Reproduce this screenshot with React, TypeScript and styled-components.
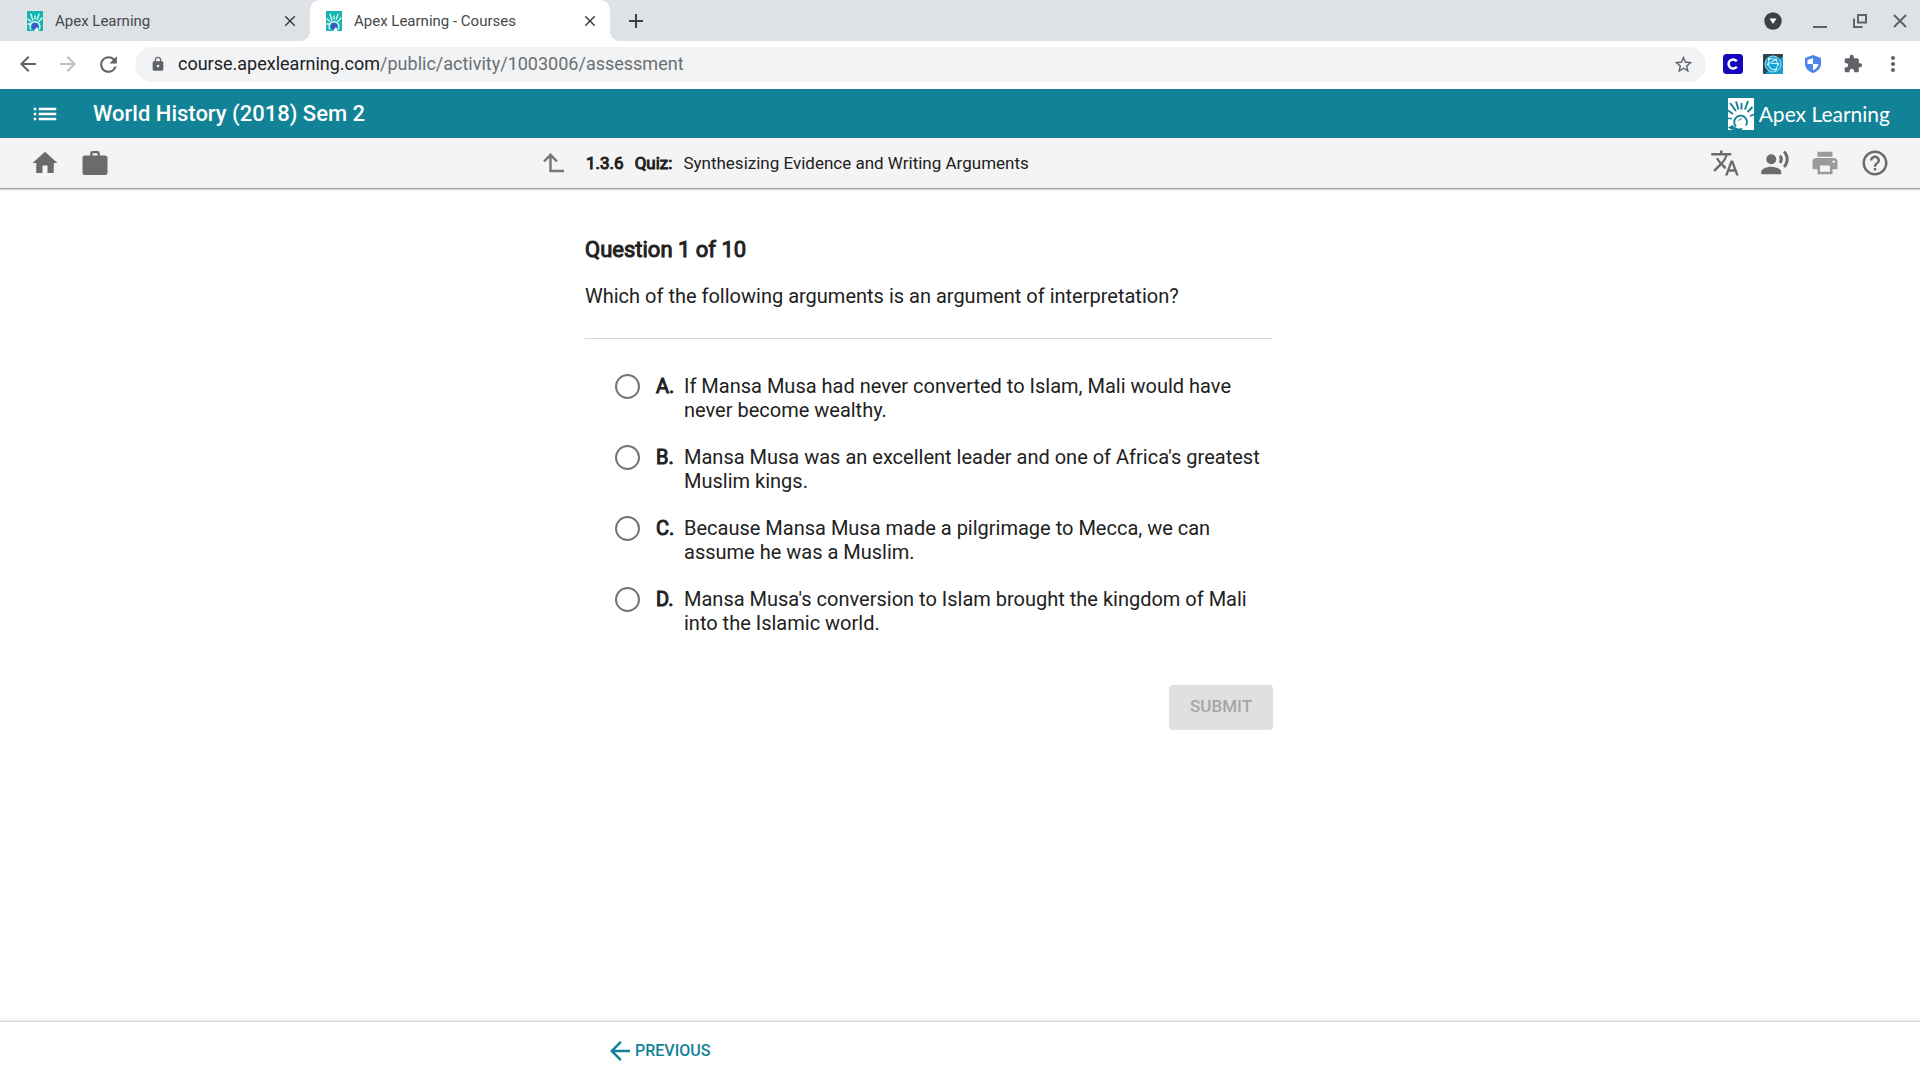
import React, { useState } from "react";
import styled, { createGlobalStyle, css } from "styled-components";
import {
  MdAdd,
  MdArrowBack,
  MdArrowForward,
  MdClose,
  MdExtension,
  MdHelpOutline,
  MdHome,
  MdList,
  MdLock,
  MdMoreVert,
  MdPrint,
  MdRecordVoiceOver,
  MdRefresh,
  MdStarBorder,
  MdTranslate,
} from "react-icons/md";

const teal = "#128296";
const ink = "#212121";

const GlobalStyle = createGlobalStyle`
  *, *::before, *::after { box-sizing: border-box; }
  body {
    margin: 0;
    background: #fff;
    color: ${ink};
    font-family: Roboto, "Liberation Sans", sans-serif;
  }
  button { font-family: inherit; }
  svg { display: block; flex: none; }
`;

/* Regular letter widths with a thickened outline */
const heavy = css`
  font-weight: 400;
  -webkit-text-stroke: 1px currentColor;
`;

const Page = styled.div`
  min-height: 100vh;
  display: flex;
  flex-direction: column;
`;

/* ---------- browser chrome ---------- */

const TabStrip = styled.header`
  display: flex;
  align-items: stretch;
  height: 41px;
  background: #dee1e6;
`;

const Tab = styled.div<{ $active?: boolean }>`
  position: relative;
  display: flex;
  align-items: center;
  gap: 12px;
  width: ${(p) => (p.$active ? 300 : 310)}px;
  padding: 0 11px 0 ${(p) => (p.$active ? 16 : 27)}px;
  background: ${(p) => (p.$active ? "#fff" : "transparent")};
  border-radius: ${(p) => (p.$active ? "10px 10px 0 0" : "0")};
  color: #45494d;
  font-size: 15px;
  line-height: 20px;

  &::before,
  &::after {
    content: "";
    display: ${(p) => (p.$active ? "block" : "none")};
    position: absolute;
    bottom: 0;
    width: 10px;
    height: 10px;
  }
  &::before {
    left: -10px;
    background: radial-gradient(circle at 0 0, transparent 10px, #fff 10px);
  }
  &::after {
    right: -10px;
    background: radial-gradient(circle at 100% 0, transparent 10px, #fff 10px);
  }
`;

const TabTitle = styled.span`
  flex: 1;
`;

const IconButton = styled.button<{ $size: number; $color?: string }>`
  display: flex;
  align-items: center;
  justify-content: center;
  flex: none;
  width: ${(p) => p.$size}px;
  height: ${(p) => p.$size}px;
  padding: 0;
  border: 0;
  background: none;
  color: ${(p) => p.$color || "#5f6368"};
  cursor: pointer;
`;

const NewTab = styled.div`
  display: flex;
  align-items: center;
  padding-left: 14px;
`;

const WindowControls = styled.div`
  display: flex;
  align-items: center;
  margin-left: auto;
`;

const AccountSlot = styled.div`
  padding-right: 7px;
`;

const AddressRow = styled.div`
  display: flex;
  align-items: center;
  height: 48px;
  padding: 0 7px 2px 8px;
`;

const AddressBar = styled.div`
  display: flex;
  align-items: center;
  flex: 1;
  height: 35px;
  margin: 0 7px;
  padding: 0 12px 0 15px;
  border-radius: 18px;
  background: #f1f3f4;
  color: #5f6368;
`;

const Url = styled.span`
  flex: 1;
  margin-left: 12px;
  color: #6b6f73;
  font-size: 18px;
  line-height: 24px;
`;

const Host = styled.span`
  color: #202124;
`;

/* ---------- course header ---------- */

const CourseBar = styled.div`
  display: flex;
  align-items: center;
  height: 49px;
  padding: 0 30px 0 20px;
  background: ${teal};
  color: #fff;
`;

const CourseTitle = styled.h1`
  flex: 1;
  margin: 0 0 0 23px;
  font-size: 22px;
  line-height: 28px;
  font-weight: 500;
`;

const Brand = styled.a`
  display: flex;
  align-items: center;
  gap: 5px;
  color: #fff;
  text-decoration: none;
  font-family: Lato, "Open Sans", sans-serif;
  font-size: 21px;
  line-height: 32px;
`;

const ActivityBar = styled.nav`
  display: grid;
  grid-template-columns: 1fr 750px 1fr;
  align-items: center;
  height: 51px;
  padding: 0 20px;
  background: #f4f4f4;
  border-bottom: 1px solid #9b9b9b;
  box-shadow: 0 1px 2px rgba(0, 0, 0, 0.2);
`;

const Tools = styled.div<{ $end?: boolean }>`
  display: flex;
  justify-content: ${(p) => (p.$end ? "flex-end" : "flex-start")};
`;

const Activity = styled.div`
  display: flex;
  align-items: center;
  gap: 11px;
  margin-left: -52px;
  font-size: 17px;
  line-height: 24px;
`;

const Strong = styled.strong`
  ${heavy}
`;

/* ---------- question ---------- */

const Main = styled.main`
  flex: 1;
  width: 100%;
  max-width: 750px;
  margin: 0 auto;
  padding: 47px 62px 0 0;
`;

const Heading = styled.h2`
  margin: 0;
  font-size: 22px;
  line-height: 28px;
  ${heavy}
`;

const Prompt = styled.p`
  margin: 20px 0 0;
  padding-bottom: 30px;
  border-bottom: 1px solid #d8d8d8;
  font-size: 20px;
  line-height: 24px;
`;

const Options = styled.form`
  display: flex;
  flex-direction: column;
  gap: 23px;
  padding: 35px 0 0 30px;
`;

const Option = styled.label`
  display: flex;
  align-items: flex-start;
  font-size: 20px;
  line-height: 24px;
  cursor: pointer;
`;

const Radio = styled.input`
  appearance: none;
  flex: none;
  width: 25px;
  height: 25px;
  margin: 0 16px 0 0;
  border: 2px solid #757575;
  border-radius: 50%;
  background: #fff;

  &:checked {
    border-color: ${teal};
    background: radial-gradient(circle, ${teal} 6px, #fff 7px);
  }
`;

const Letter = styled.strong`
  flex: none;
  width: 28px;
  ${heavy}
`;

const Actions = styled.div`
  display: flex;
  justify-content: flex-end;
  padding-top: 50px;
`;

const Submit = styled.button`
  height: 45px;
  padding: 0 21px 4px;
  border: 0;
  border-radius: 4px;
  background: #e0e0e0;
  color: #a6a6a6;
  font-size: 17px;
  line-height: 24px;
  font-weight: 500;
`;

const Footer = styled.footer`
  height: 59px;
  border-top: 1px solid #dadada;
  background: #fff;
  box-shadow: 0 -1px 4px rgba(0, 0, 0, 0.12);
`;

const FooterInner = styled.div`
  display: flex;
  align-items: center;
  max-width: 750px;
  height: 100%;
  margin: 0 auto;
  padding-left: 20px;
`;

const Previous = styled.button`
  display: flex;
  align-items: center;
  padding: 0;
  border: 0;
  background: none;
  color: ${teal};
  font-size: 16px;
  line-height: 24px;
  font-weight: 500;
  cursor: pointer;
`;

/* ---------- drawings ---------- */

const Favicon = () => (
  <svg width="16" height="20" viewBox="0 0 16 20" aria-hidden="true">
    <rect width="16" height="20" fill="#17b5b0" />
    <g stroke="#e4fbf9" strokeWidth="1.3" strokeLinecap="round" fill="none">
      <path d="M5.8 9.2 4 3.2M8 8V5M10.2 8.4 12 3.2M4 10.4 1 8M12 10.4 15 7M3.5 13H1" />
      <path d="M3.5 18a5 5 0 1 1 9 0" strokeWidth="1.5" />
    </g>
    <circle cx="8" cy="15.2" r="3.4" fill="#3a5bc4" />
    <path d="M8 18.5 10 16l1.2 2.6V20H7.4z" fill="#fff" />
  </svg>
);

const BrandMark = () => (
  <svg width="26" height="32" viewBox="0 0 26 32" aria-hidden="true">
    <rect width="26" height="32" fill="#fff" />
    <g stroke={teal} fill="none">
      <path d="M2 5l6 8M8 3.500l2.500 8M13.500 5v6.500M20 3l-3 8.500M24.500 9 19.500 14M0 12.500l5 3.500" strokeWidth="1.900" />
      <path d="M0 20.500h4M22 18l4-1.500" strokeWidth="1.600" />
      <path d="M8 28.500A6.400 6.400 0 1 1 18 27.500" strokeWidth="1.900" />
      <path d="M10.500 23A3.600 3.600 0 0 1 14 20.800" strokeWidth="1" />
    </g>
    <path d="M0 29.500 4.500 27c2 3 6 4 10 3l-.5 2H6c-2-.3-4-1-6-2.500z" fill={teal} />
  </svg>
);

const AccountIcon = () => (
  <svg width="18" height="18" viewBox="0 0 18 18" aria-hidden="true">
    <circle cx="9" cy="9" r="8.7" fill="#3c4043" />
    <path d="M5.500 6.500h7L9 12z" fill="#fff" />
  </svg>
);

const MinimizeIcon = () => (
  <svg width="14" height="14" viewBox="0 0 14 14" aria-hidden="true">
    <path d="M0 13h14" stroke="#5f6368" strokeWidth="2" />
  </svg>
);

const RestoreIcon = () => (
  <svg width="14" height="14" viewBox="0 0 14 14" aria-hidden="true">
    <path d="M5 1h8v7.500H5zM1 4.500V13h8.500" fill="none" stroke="#5f6368" strokeWidth="2" />
  </svg>
);

const WindowCloseIcon = () => (
  <svg width="14" height="14" viewBox="0 0 14 14" aria-hidden="true">
    <path d="m1 1 12 12M13 1 1 13" stroke="#5f6368" strokeWidth="2" />
  </svg>
);

const CleverIcon = () => (
  <svg width="20" height="20" viewBox="0 0 20 20" aria-hidden="true">
    <rect width="20" height="20" rx="3.500" fill="#1408bd" />
    <path d="M13.800 7.200A4.600 4.600 0 1 0 13.800 12.800" fill="none" stroke="#fff" strokeWidth="2.500" />
  </svg>
);

const GlobeIcon = () => (
  <svg width="20" height="20" viewBox="0 0 20 20" aria-hidden="true">
    <rect width="20" height="20" rx="1" fill="#33414f" />
    <path d="M20 2v18H2z" fill="#1b9fcc" />
    <circle cx="10" cy="10" r="8" fill="#1ba3d6" stroke="#8fe2f8" />
    <g stroke="#c8f3fd" strokeWidth="1" fill="none">
      <path d="M6 4.500 5 10l3 5 5 1M6 4.500l7 1 2 5-2 5.500M5 10l8-4.500M8 9.500h7" />
    </g>
    <g fill="#e6fbff">
      <circle cx="6" cy="5" r="1.100" />
      <circle cx="13" cy="5.500" r="1.100" />
      <circle cx="5" cy="10.500" r="1.100" />
      <circle cx="15" cy="10" r="1.100" />
      <circle cx="12.500" cy="15.500" r="1.100" />
    </g>
  </svg>
);

const ShieldIcon = () => (
  <svg width="16" height="18" viewBox="0 0 16 18" aria-hidden="true">
    <path d="M8 0 16 3v5.500c0 4.500-3.400 8.200-8 9.500-4.600-1.300-8-5-8-9.500V3z" fill="#4a86e8" />
    <path d="M8 3v6H2.500V5zM8 9h5.500c-.4 3-2.500 5.200-5.500 6.300z" fill="#fff" />
  </svg>
);

const UpLevelIcon = () => (
  <svg width="22" height="20" viewBox="0 0 22 20" aria-hidden="true">
    <path d="M21 18H7.500V2.500M1 8.500l6.500-6.700L14 8.500" fill="none" stroke="#757575" strokeWidth="2.400" />
  </svg>
);

const BriefcaseIcon = () => (
  <svg width="26" height="24" viewBox="0 0 26 24" aria-hidden="true">
    <path
      d="M10.500 0h5a2.300 2.300 0 0 1 2.300 2.300V4.500h5.200A2.500 2.500 0 0 1 25.500 7v14.500A2.500 2.500 0 0 1 23 24H3a2.500 2.500 0 0 1-2.500-2.500V7A2.500 2.500 0 0 1 3 4.500h5.200V2.300A2.300 2.300 0 0 1 10.500 0zm0 2.300v2.200h5V2.300z"
      fill="currentColor"
    />
  </svg>
);

/* ---------- data ---------- */

const options = [
  { letter: "A", text: "If Mansa Musa had never converted to Islam, Mali would have never become wealthy." },
  { letter: "B", text: "Mansa Musa was an excellent leader and one of Africa's greatest Muslim kings." },
  { letter: "C", text: "Because Mansa Musa made a pilgrimage to Mecca, we can assume he was a Muslim." },
  { letter: "D", text: "Mansa Musa's conversion to Islam brought the kingdom of Mali into the Islamic world." },
];

const toolColor = "#6b6b6b";

export default function App() {
  const [answer, setAnswer] = useState("");

  return (
    <Page>
      <GlobalStyle />
      <TabStrip>
        <Tab>
          <Favicon />
          <TabTitle>Apex Learning</TabTitle>
          <IconButton $size={18} $color="#3c4043" aria-label="Close tab">
            <MdClose size={18} />
          </IconButton>
        </Tab>
        <Tab $active>
          <Favicon />
          <TabTitle>Apex Learning - Courses</TabTitle>
          <IconButton $size={18} $color="#3c4043" aria-label="Close tab">
            <MdClose size={18} />
          </IconButton>
        </Tab>
        <NewTab>
          <IconButton $size={24} $color="#3c4043" aria-label="New tab">
            <MdAdd size={24} />
          </IconButton>
        </NewTab>
        <WindowControls>
          <AccountSlot>
            <IconButton $size={40} aria-label="Account"><AccountIcon /></IconButton>
          </AccountSlot>
          <IconButton $size={40} aria-label="Minimize"><MinimizeIcon /></IconButton>
          <IconButton $size={40} aria-label="Restore"><RestoreIcon /></IconButton>
          <IconButton $size={40} aria-label="Close window"><WindowCloseIcon /></IconButton>
        </WindowControls>
      </TabStrip>

      <AddressRow>
        <IconButton $size={40} aria-label="Back"><MdArrowBack size={24} /></IconButton>
        <IconButton $size={40} $color="#bdbfc2" aria-label="Forward"><MdArrowForward size={24} /></IconButton>
        <IconButton $size={40} aria-label="Reload"><MdRefresh size={25} /></IconButton>
        <AddressBar>
          <MdLock size={16} />
          <Url><Host>course.apexlearning.com</Host>/public/activity/1003006/assessment</Url>
          <IconButton $size={22} aria-label="Bookmark this page"><MdStarBorder size={21} /></IconButton>
        </AddressBar>
        <IconButton $size={40} aria-label="Clever"><CleverIcon /></IconButton>
        <IconButton $size={40} aria-label="Globe extension"><GlobeIcon /></IconButton>
        <IconButton $size={40} aria-label="Shield extension"><ShieldIcon /></IconButton>
        <IconButton $size={40} aria-label="Extensions"><MdExtension size={20} /></IconButton>
        <IconButton $size={40} aria-label="Browser menu"><MdMoreVert size={24} /></IconButton>
      </AddressRow>

      <CourseBar>
        <IconButton $size={50} $color="#fff" aria-label="Course menu"><MdList size={30} /></IconButton>
        <CourseTitle>World History (2018) Sem 2</CourseTitle>
        <Brand href="#"><BrandMark />Apex Learning</Brand>
      </CourseBar>

      <ActivityBar>
        <Tools>
          <IconButton $size={50} $color={toolColor} aria-label="Home"><MdHome size={30} /></IconButton>
          <IconButton $size={50} $color={toolColor} aria-label="Portfolio"><BriefcaseIcon /></IconButton>
        </Tools>
        <Activity>
          <IconButton $size={42} aria-label="Up one level"><UpLevelIcon /></IconButton>
          <Strong>1.3.6</Strong>
          <Strong>Quiz:</Strong>
          <span>Synthesizing Evidence and Writing Arguments</span>
        </Activity>
        <Tools $end>
          <IconButton $size={50} $color={toolColor} aria-label="Translate"><MdTranslate size={30} /></IconButton>
          <IconButton $size={50} $color={toolColor} aria-label="Read aloud"><MdRecordVoiceOver size={30} /></IconButton>
          <IconButton $size={50} $color="#9b9b9b" aria-label="Print"><MdPrint size={30} /></IconButton>
          <IconButton $size={50} $color={toolColor} aria-label="Help"><MdHelpOutline size={30} /></IconButton>
        </Tools>
      </ActivityBar>

      <Main>
        <Heading>Question 1 of 10</Heading>
        <Prompt>Which of the following arguments is an argument of interpretation?</Prompt>
        <Options id="quiz">
          {options.map((o) => (
            <Option key={o.letter} htmlFor={`option-${o.letter}`}>
              <Radio
                type="radio"
                name="answer"
                id={`option-${o.letter}`}
                value={o.letter}
                checked={answer === o.letter}
                onChange={() => setAnswer(o.letter)}
              />
              <Letter>{o.letter}.</Letter>
              <span>{o.text}</span>
            </Option>
          ))}
        </Options>
        <Actions>
          <Submit type="submit" form="quiz" disabled={!answer}>SUBMIT</Submit>
        </Actions>
      </Main>

      <Footer>
        <FooterInner>
          <Previous>
            <MdArrowBack size={30} />
            PREVIOUS
          </Previous>
        </FooterInner>
      </Footer>
    </Page>
  );
}
